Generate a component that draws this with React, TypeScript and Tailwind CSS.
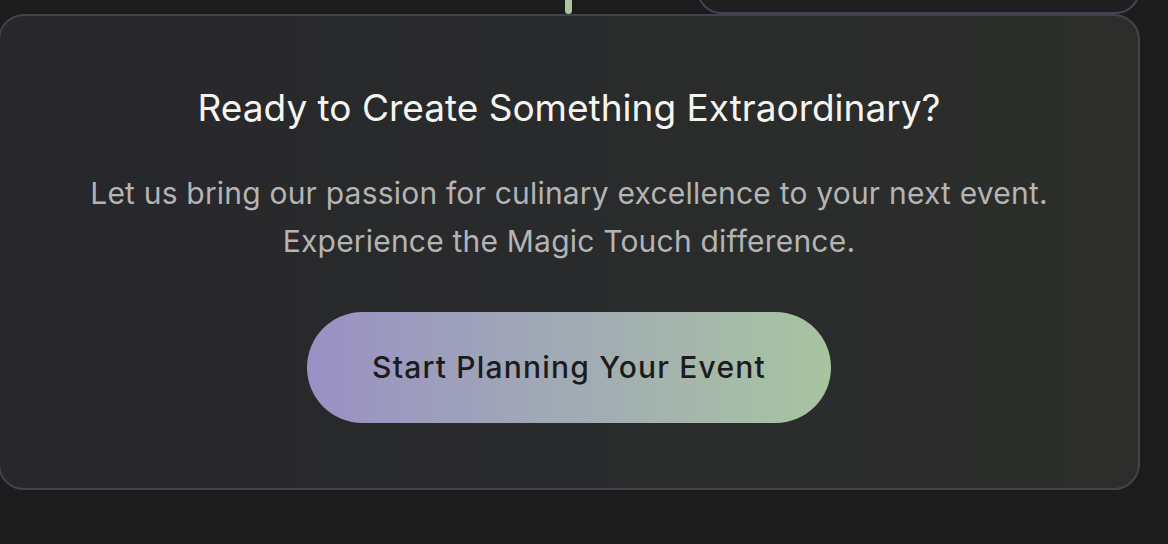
export default function App() {
    return (
        <div
            className="flex flex-col w-[1168px] h-[544px] overflow-hidden bg-[#1c1c1c]"
            style={{ fontFamily: "Inter, 'Noto Sans', sans-serif" }}
        >
            <div className="flex items-end h-[14px] shrink-0">
                <div className="w-[565px] shrink-0" />
                <div className="w-[7px] h-full rounded-b-full bg-[#a8c4a0] shrink-0" />
                <div className="w-[125px] shrink-0" />
                <div className="w-[443px] h-[80px] shrink-0 rounded-b-[24px] border-2 border-t-0 border-[#45434f] bg-[#1f1f21]" />
            </div>

            <section className="flex flex-col items-center w-[1142px] -ml-[2px] shrink-0 pt-[70px] pb-[65px] rounded-[26px] border-2 border-[#44424e] bg-gradient-to-r from-[#27272c] to-[#2c2e2b]">
                <h2 className="text-[37px] leading-[44px] font-normal text-[#f5f5f0]">
                    Ready to Create Something Extraordinary?
                </h2>
                <p className="mt-[39px] text-[30px] leading-[48px] tracking-[0.2px] text-center text-[#b4b4b4]">
                    Let us bring our passion for culinary excellence to your next event.
                    <br />
                    Experience the Magic Touch difference.
                </p>
                <button
                    type="button"
                    className="mt-[47px] h-[111px] w-[524px] rounded-full bg-gradient-to-r from-[#9a90c4] to-[#a8c4a0] text-[30px] tracking-[1.2px] text-[#1c1c1c] font-medium"
                >
                    Start Planning Your Event
                </button>
            </section>
        </div>
    )
}
